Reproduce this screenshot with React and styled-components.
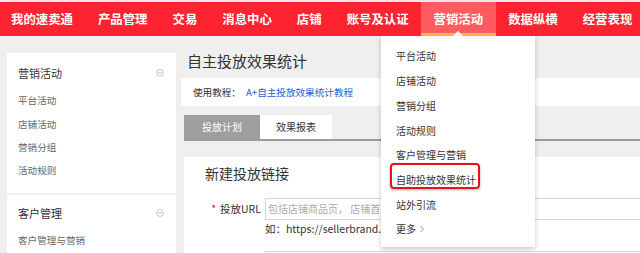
import React from 'react'
import styled, { createGlobalStyle } from 'styled-components'

const GlobalStyle = createGlobalStyle`
html, body {
  margin: 0;
  padding: 0;
  background: #efefef;
}
body {
  font-family: "Noto Sans CJK SC", "Noto Sans", sans-serif;
  overflow: hidden;
}
`;

const Page = styled.div`
position: relative;
width: 640px;
height: 253px;
overflow: hidden;
background: #efefef;
`;

const TopBar = styled.div`
height: 34px;
border-top: 2px solid #fbe4e4;
background: #fe2331;
display: flex;
`;

const NavList = styled.div`
display: flex;
margin-left: -1.5px;
`;

const NavItem = styled.div`
position: relative;
padding: 0 12.5px;
line-height: 34px;
font-size: 12.4px;
font-weight: 700;
color: #fff;
white-space: nowrap;
background: ${p => (p.$active ? '#ff5b60' : 'transparent')};
box-shadow: ${p => (p.$active ? 'inset 0 -3px 0 #fbb65c' : 'none')};

&::after {
  content: '';
  display: ${p => (p.$active ? 'block' : 'none')};
  position: absolute;
  left: 50%;
  bottom: 0;
  transform: translateX(-50%);
  border-left: 5px solid transparent;
  border-right: 5px solid transparent;
  border-bottom: 5px solid #fff;
}
`;

const Body = styled.div`
display: flex;
align-items: flex-start;
gap: 5px;
width: 900px;
padding-left: 7px;
`;

const Sidebar = styled.div`
width: 169px;
flex-shrink: 0;
margin-top: 17px;
background: #fff;
`;

const SideSection = styled.div`
padding: ${p => p.$top}px 12.5px 10.3px 11px;
& + & {
  border-top: 2px solid #f0f0f0;
}
`;

const SideHeader = styled.div`
display: flex;
justify-content: space-between;
align-items: center;
height: 20px;
font-size: 11px;
color: #333;
`;

const SideList = styled.div`
margin-top: 6.35px;
`;

const SideItem = styled.div`
line-height: 23.33px;
font-size: 9.6px;
color: #666;
`;

const Main = styled.div`
flex: 1;
min-width: 0;
padding-top: 15px;
`;

const Title = styled.div`
margin-left: 6px;
line-height: 20px;
font-size: 15px;
color: #333;
`;

const Tutorial = styled.div`
margin-top: 7px;
height: 28px;
display: flex;
align-items: center;
padding-left: 12px;
background: #fff;
font-size: 9.6px;
color: #333;
`;

const TutorialLink = styled.span`
margin-left: 5px;
color: #2461d2;
`;

const Tabs = styled.div`
display: flex;
margin-top: 9px;
margin-left: 3px;
border-bottom: 2px solid #9b9b9b;
`;

const Tab = styled.div`
width: ${p => p.$w}px;
height: 24px;
line-height: 24px;
text-align: center;
font-size: 10px;
background: ${p => (p.$active ? '#9e9e9e' : '#fff')};
color: ${p => (p.$active ? '#fff' : '#333')};
`;

const Card = styled.div`
margin-top: 16px;
margin-left: 3px;
padding-top: 6px;
height: 120px;
background: #fff;
`;

const CardTitle = styled.div`
margin-left: 21px;
line-height: 20px;
font-size: 14px;
color: #333;
`;

const FormRow = styled.div`
display: grid;
grid-template-columns: 77px 1fr;
column-gap: 4px;
margin-top: 15px;
`;

const Label = styled.div`
text-align: right;
line-height: 22px;
font-size: 10.5px;
color: #333;
`;

const Star = styled.span`
color: #e8101a;
margin-right: 4px;
`;

const Field = styled.div``;

const Input = styled.div`
box-sizing: border-box;
height: 22px;
border: 1px solid #d4d4d4;
padding-left: 2px;
line-height: 20px;
font-size: 10px;
color: #aaa;
white-space: nowrap;
`;

const Hint = styled.div`
line-height: 18px;
font-size: 10.5px;
color: #333;
margin-bottom: 13px;
`;

const Dropdown = styled.div`
position: absolute;
left: 381px;
top: 36px;
width: 154px;
height: 211px;
box-sizing: border-box;
padding: 7.6px 0 0 15px;
background: #fff;
box-shadow: 0 2px 5px rgba(0, 0, 0, 0.22);
`;

const DropItem = styled.div`
position: relative;
display: flex;
align-items: center;
height: 24.7px;
font-size: 10px;
color: #333;

&::before {
  content: '';
  display: ${p => (p.$marked ? 'block' : 'none')};
  position: absolute;
  left: -6px;
  top: -4.5px;
  width: 90px;
  height: 26px;
  box-sizing: border-box;
  border: 2px solid #e8101a;
  border-radius: 4px;
  box-shadow: 0 1px 3px rgba(0, 0, 0, 0.3);
}
`;

const MinusIcon = () => (
  <svg width="8" height="8" viewBox="0 0 8 8">
    <circle cx="4" cy="4" r="3.4" fill="none" stroke="#b5b5b5" strokeWidth="0.8" />
    <line x1="2.4" y1="4" x2="5.6" y2="4" stroke="#999" strokeWidth="0.8" />
  </svg>
);

const Chevron = () => (
  <svg width="6" height="8" viewBox="0 0 6 8" style={{ marginLeft: 3 }}>
    <path d="M1.5 1 L4.5 4 L1.5 7" fill="none" stroke="#888" strokeWidth="0.9" />
  </svg>
);

const nav = ['我的速卖通', '产品管理', '交易', '消息中心', '店铺', '账号及认证', '营销活动', '数据纵横', '经营表现'];
const menu = ['平台活动', '店铺活动', '营销分组', '活动规则', '客户管理与营销', '自助投放效果统计', '站外引流'];

export default function App() {
  return (
    <Page>
      <GlobalStyle />
      <TopBar>
        <NavList>
          {nav.map(n => (
            <NavItem key={n} $active={n === '营销活动'}>{n}</NavItem>
          ))}
        </NavList>
      </TopBar>
      <Body>
        <Sidebar>
          <SideSection $top={10}>
            <SideHeader>营销活动<MinusIcon /></SideHeader>
            <SideList>
              {['平台活动', '店铺活动', '营销分组', '活动规则'].map(s => (
                <SideItem key={s}>{s}</SideItem>
              ))}
            </SideList>
          </SideSection>
          <SideSection $top={8}>
            <SideHeader>客户管理<MinusIcon /></SideHeader>
            <SideList>
              <SideItem>客户管理与营销</SideItem>
            </SideList>
          </SideSection>
        </Sidebar>
        <Main>
          <Title>自主投放效果统计</Title>
          <Tutorial>
            使用教程：<TutorialLink>A+自主投放效果统计教程</TutorialLink>
          </Tutorial>
          <Tabs>
            <Tab $w={76} $active>投放计划</Tab>
            <Tab $w={72}>效果报表</Tab>
          </Tabs>
          <Card>
            <CardTitle>新建投放链接</CardTitle>
            <FormRow>
              <Label><Star>*</Star>投放URL</Label>
              <Field>
                <Input>包括店铺商品页， 店铺首页，店铺活动页等</Input>
                <Hint>如：https://sellerbrand.aliexpress.com/store/123456</Hint>
                <Input />
              </Field>
            </FormRow>
          </Card>
        </Main>
      </Body>
      <Dropdown>
        {menu.map(m => (
          <DropItem key={m} $marked={m === '自助投放效果统计'}>{m}</DropItem>
        ))}
        <DropItem>更多<Chevron /></DropItem>
      </Dropdown>
    </Page>
  )
}
